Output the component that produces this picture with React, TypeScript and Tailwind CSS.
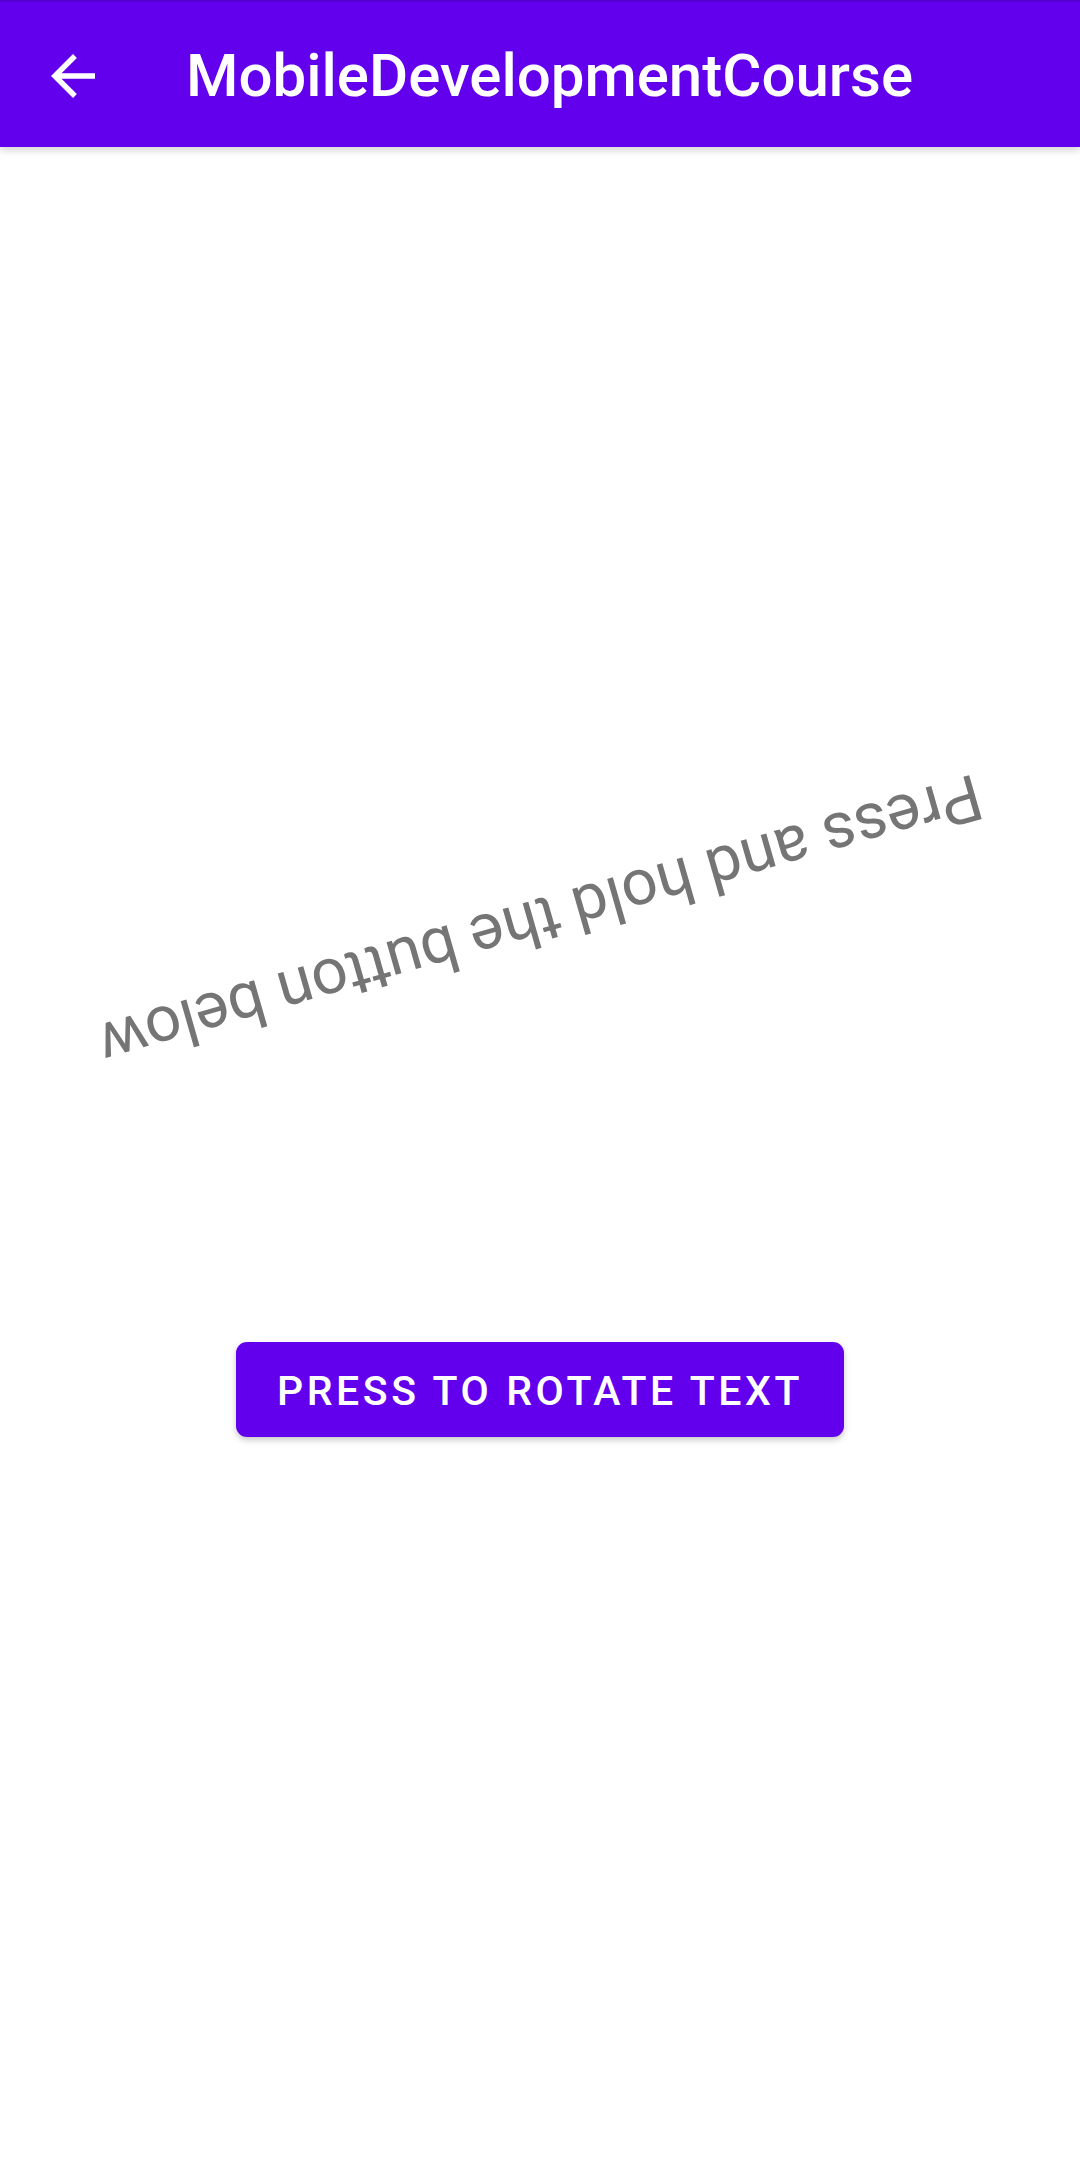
import React from 'react';

const roboto = { fontFamily: 'Roboto, "Noto Sans", sans-serif' };

function BackArrow() {
  return (
    <svg width="66" height="66" viewBox="0 0 24 24" fill="white">
      <path d="M20 11H7.83l5.59-5.59L12 4l-8 8 8 8 1.41-1.41L7.83 13H20v-2z" />
    </svg>
  );
}

export default function App() {
  return (
    <div className="w-[1080px] h-[2182px] bg-white flex flex-col font-['Roboto',sans-serif]" style={roboto}>
      {/* Toolbar */}
      <div className="relative z-10 shrink-0 h-[147px] bg-[#6200ee] shadow-[0_3px_8px_rgba(0,0,0,0.18)] flex flex-col">
        <div className="h-[2px] bg-[#5500d2]" />
        <div className="flex-1 flex items-center pl-[40px] pt-[3px]">
          <BackArrow />
          <h1 className="ml-[80px] text-[60px] leading-none font-medium text-white">MobileDevelopmentCourse</h1>
        </div>
      </div>

      {/* Content */}
      <div className="flex-1 flex flex-col items-center">
        <div className="mt-[735px] h-[77px] flex items-center justify-center">
          <p className="inline-block rotate-[164deg] text-[64px] leading-[77px] text-[#757575] whitespace-nowrap">
            Press and hold the button below
          </p>
        </div>

        <button className="mt-[383px] w-[608px] h-[95px] pt-[5px] rounded-[11px] bg-[#6200ee] shadow-[0_3px_6px_rgba(0,0,0,0.22)] flex items-center justify-center text-white text-[41px] font-medium uppercase tracking-[3.6px]">
          Press to rotate text
        </button>
      </div>
    </div>
  );
}
